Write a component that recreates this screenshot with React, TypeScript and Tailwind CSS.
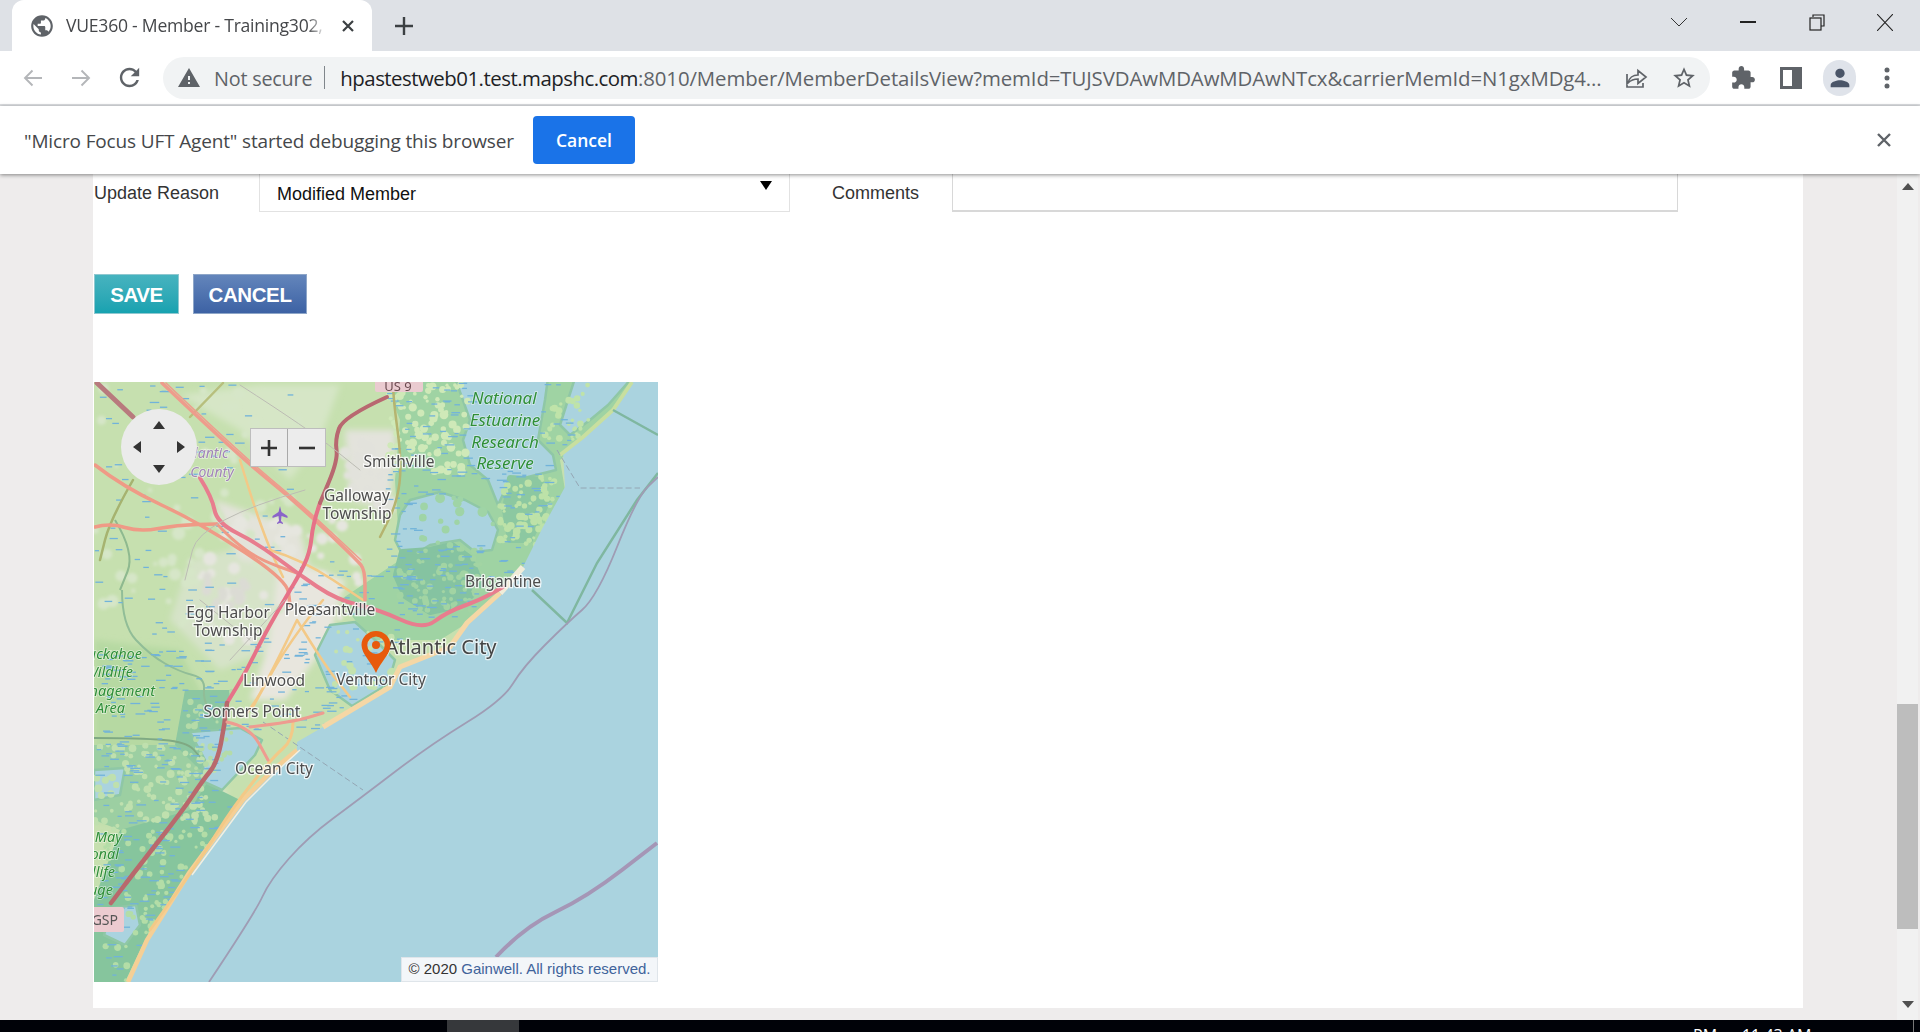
import React from "react";

const UI = "font-['Open_Sans',sans-serif]";

function I({ d, size = 24, cls = "", fill = "currentColor" }: { d: string; size?: number; cls?: string; fill?: string }) {
  return (
    <svg width={size} height={size} viewBox="0 0 24 24" className={cls} fill={fill}>
      <path d={d} />
    </svg>
  );
}

const GLOBE = "M12 2C6.48 2 2 6.48 2 12s4.48 10 10 10 10-4.48 10-10S17.52 2 12 2zm-1 17.93c-3.95-.49-7-3.85-7-7.93 0-.62.08-1.21.21-1.79L9 15v1c0 1.1.9 2 2 2v1.93zm6.9-2.54c-.26-.81-1-1.39-1.9-1.39h-1v-3c0-.55-.45-1-1-1H8v-2h2c.55 0 1-.45 1-1V7h2c1.1 0 2-.9 2-2v-.41c2.93 1.19 5 4.06 5 7.41 0 2.08-.8 3.97-2.1 5.39z";
const PUZZLE = "M20.5 11H19V7c0-1.1-.9-2-2-2h-4V3.5C13 2.12 11.88 1 10.5 1S8 2.12 8 3.5V5H4c-1.1 0-1.99.9-1.99 2v3.8H3.5c1.49 0 2.7 1.21 2.7 2.7s-1.21 2.7-2.7 2.7H2V20c0 1.1.9 2 2 2h3.8v-1.5c0-1.49 1.21-2.7 2.7-2.7 1.49 0 2.7 1.21 2.7 2.7V22H17c1.1 0 2-.9 2-2v-4h1.5c1.38 0 2.5-1.12 2.5-2.5S21.88 11 20.5 11z";
const WARN = "M1 21h22L12 2 1 21zm12-3h-2v-2h2v2zm0-4h-2v-4h2v4z";
const RELOAD = "M17.65 6.35C16.2 4.9 14.21 4 12 4c-4.42 0-7.99 3.58-7.99 8s3.57 8 7.99 8c3.73 0 6.84-2.55 7.73-6h-2.08c-.82 2.33-3.04 4-5.65 4-3.31 0-6-2.69-6-6s2.69-6 6-6c1.66 0 3.14.69 4.22 1.78L13 11h7V4l-2.35 2.35z";
const STAR = "M22 9.24l-7.19-.62L12 2 9.19 8.63 2 9.24l5.46 4.73L5.82 21 12 17.27 18.18 21l-1.63-7.03L22 9.24zM12 15.4l-3.76 2.27 1-4.28-3.32-2.88 4.38-.38L12 6.1l1.71 4.04 4.38.38-3.32 2.88 1 4.28L12 15.4z";
const PERSON = "M12 12c2.21 0 4-1.79 4-4s-1.79-4-4-4-4 1.79-4 4 1.79 4 4 4zm0 2c-2.67 0-8 1.34-8 4v2h16v-2c0-2.66-5.33-4-8-4z";

function TabStrip() {
  return (
    <div className="flex h-[51px] shrink-0 items-end bg-[#dee1e6]">
      <div className="ml-[12px] flex h-[51px] w-[360px] items-center rounded-t-[12px] bg-white pl-[17px] text-[#45474a]">
        <I d={GLOBE} size={26} cls="text-[#5f6368]" />
        <span className="ml-[11px] w-[260px] overflow-hidden whitespace-nowrap text-[17.6px] tracking-[-0.25px] [mask-image:linear-gradient(to_right,black_93%,transparent)]">VUE360 - Member - Training302,</span>
        <svg width="14" height="14" viewBox="0 0 14 14" className="ml-[15px]"><path d="M2 2l10 10M12 2L2 12" stroke="#3c4043" strokeWidth="2.2" /></svg>
      </div>
      <div className="flex h-[51px] w-[66px] items-center justify-center pr-[3px]">
        <svg width="20" height="20" viewBox="0 0 20 20"><path d="M10 1v18M1 10h18" stroke="#3c4043" strokeWidth="2.4" /></svg>
      </div>
      <div className="flex-1" />
      <div className="flex h-[51px] items-center pb-[7px]">
        <svg width="18" height="10" viewBox="0 0 18 10" className="mr-[52px]"><path d="M1 1l8 8 8-8" stroke="#333" strokeWidth="1" fill="none" /></svg>
        <div className="mr-[53px] h-[1.5px] w-[16px] bg-[#222]" />
        <svg width="16" height="17" viewBox="0 0 16 17" className="mr-[52px]" fill="none" stroke="#222" strokeWidth="1.2"><path d="M4 3V1h11v11h-3" /><rect x="1" y="4" width="11" height="12" /></svg>
        <svg width="16" height="17" viewBox="0 0 16 17" className="mr-[27px]"><path d="M0 0l16 17M16 0L0 17" stroke="#222" strokeWidth="1.1" /></svg>
      </div>
    </div>
  );
}

function Toolbar() {
  return (
    <div className="flex h-[55px] shrink-0 items-center border-b-2 border-[#dcdee1] bg-white">
      <div className="ml-[23px] flex w-[130px] items-center text-[#b4b6b9]">
        <svg width="20" height="20" viewBox="0 0 20 20" fill="none" stroke="currentColor" strokeWidth="1.9"><path d="M19 10H2M9.5 2.5L2 10l7.500 7.500" /></svg>
        <svg width="20" height="20" viewBox="0 0 20 20" className="ml-[28px]" fill="none" stroke="currentColor" strokeWidth="1.9"><path d="M1 10h17M10.500 2.500L18 10l-7.500 7.500" /></svg>
        <I d={RELOAD} size={29} cls="ml-[24px] text-[#5f6368]" />
      </div>
      <div className="ml-[10px] flex h-[42px] w-[1547px] items-center rounded-full bg-[#f1f3f4] pl-[14px]">
        <I d={WARN} size={24} cls="text-[#5f6368]" />
        <span className="ml-[13px] whitespace-nowrap pt-[2px] text-[19.8px] tracking-[-0.2px] text-[#5f6368]">Not secure</span>
        <div className="ml-[12px] h-[23px] w-px bg-[#80868b]" />
        <span className="ml-[15px] w-[1262px] whitespace-nowrap pt-[2px] text-[20.4px] tracking-[-0.1px] text-[#5f6368]">
          <span className="tracking-[-0.5px] text-[#202124]">hpastestweb01.test.mapshc.com</span>:8010/Member/MemberDetailsView?memId=TUJSVDAwMDAwMDAwNTcx&amp;carrierMemId=N1gxMDg4...
        </span>
        <svg width="24" height="24" viewBox="0 0 24 24" className="ml-[22px]" fill="none" stroke="#5f6368" strokeWidth="1.700"><path d="M3 8v13h16v-4M4 17c1-5 5-8 10-8V4.500L22 11l-8 6.500V13c-4 0-7 1-10 4z" /></svg>
        <I d={STAR} size={26} cls="ml-[23px] text-[#5f6368]" />
      </div>
      <div className="ml-[20px] flex items-center text-[#5f6368]">
        <I d={PUZZLE} size={26} />
        <svg width="22" height="22" viewBox="0 0 22 22" className="ml-[24px]"><path fillRule="evenodd" d="M0 0h22v22H0zM3 3v16h9V3z" fill="#5f6368" /></svg>
        <div className="ml-[21px] flex h-[36px] w-[33px] items-center justify-center rounded-full bg-[#dfe3ea]">
          <I d={PERSON} size={28} cls="text-[#4a5568]" />
        </div>
        <svg width="6" height="22" viewBox="0 0 6 22" className="ml-[28px]" fill="#5f6368"><circle cx="3" cy="3" r="2.500" /><circle cx="3" cy="11" r="2.500" /><circle cx="3" cy="19" r="2.500" /></svg>
      </div>
    </div>
  );
}

function InfoBar() {
  return (
    <div className="z-10 flex h-[68px] shrink-0 items-center bg-white pl-[24px] shadow-[0_1px_4px_rgba(0,0,0,0.45)]">
      <span className="w-[509px] whitespace-nowrap pt-[2px] text-[19px] tracking-[-0.15px] text-[#45474a]">"Micro Focus UFT Agent" started debugging this browser</span>
      <div className="flex h-[48px] w-[102px] items-center justify-center rounded-[4px] bg-[#1a73e8] text-[17.500px] font-semibold text-white">Cancel</div>
      <div className="flex-1" />
      <svg width="16" height="16" viewBox="0 0 16 16" className="mr-[28px]"><path d="M2 2l12 12M14 2L2 14" stroke="#5f6368" strokeWidth="2.400" /></svg>
    </div>
  );
}

/* ---------- map drawing ---------- */
function rng(seed: number) {
  let s = seed;
  return () => {
    s = (s * 16807) % 2147483647;
    return s / 2147483647;
  };
}
type Box = [number, number, number, number, number];
const dashBoxes: Box[] = [
  [94, 382, 300, 640, 85],
  [94, 650, 215, 800, 140],
  [290, 560, 400, 720, 70],
  [385, 382, 570, 620, 280],
  [96, 800, 240, 982, 150],
  [200, 640, 330, 740, 50],
];
const r = rng(7421);
const dashes = dashBoxes
  .flatMap(([x0, y0, x1, y1, n]) =>
    Array.from({ length: n }, () => {
      const x = x0 + r() * (x1 - x0);
      const y = y0 + r() * (y1 - y0);
      return { x, y, l: 4 + r() * 6 };
    })
  )
  .filter((p) => !(p.x > 468 && p.x < 540 && p.y < 468) && !(p.x > 415 && p.x < 495 && p.y > 495 && p.y < 545));

type Blob = [number, number, number, number, number, string, number, number];
const blobDefs: Blob[] = [
  [500, 476, 556, 545, 70, "#bde2a8", 1.5, 4],
  [398, 548, 482, 610, 80, "#a2d4a3", 1.5, 3.5],
  [388, 384, 468, 472, 100, "#cfe9b8", 1.5, 4.500],
  [545, 384, 590, 440, 30, "#bfe3a9", 1.5, 3.5],
  [330, 625, 392, 692, 34, "#c3e2ae", 1.5, 4],
  [94, 745, 215, 830, 120, "#bfe0ae", 1.5, 4],
  [105, 830, 240, 982, 180, "#b3dda7", 1.5, 3.5],
  [412, 492, 497, 548, 16, "#9fd4a6", 2, 5],
  [185, 690, 232, 770, 30, "#b4dba8", 1.5, 3.5],
];
const r2 = rng(9913);
const blobs = blobDefs.flatMap(([x0, y0, x1, y1, n, c, a, b]) =>
  Array.from({ length: n }, () => ({
    x: x0 + r2() * (x1 - x0),
    y: y0 + r2() * (y1 - y0),
    r: a + r2() * (b - a),
    c,
  }))
);
const paleDefs: Blob[] = [
  [94, 382, 300, 640, 60, "#d6e6c8", 2, 7],
  [200, 520, 360, 640, 50, "#e6e6df", 2, 7],
  [345, 440, 395, 510, 26, "#e2e2dc", 3, 7],
  [205, 570, 260, 610, 16, "#dbdbd4", 3, 6],
];
const pales = paleDefs.flatMap(([x0, y0, x1, y1, n, c, a, b]) =>
  Array.from({ length: n }, () => ({
    x: x0 + r2() * (x1 - x0),
    y: y0 + r2() * (y1 - y0),
    r: a + r2() * (b - a),
    c,
  }))
);

function smooth(d: string) {
  return d
    .split("M")
    .filter(Boolean)
    .map((seg) => {
      const pts = seg.split("L").map((p) => p.trim().split(/\s+/).map(Number));
      if (pts.length < 3) return "M" + seg;
      let out = `M${pts[0][0]} ${pts[0][1]}`;
      for (let i = 1; i < pts.length - 1; i++) {
        const mx = (pts[i][0] + pts[i + 1][0]) / 2;
        const my = (pts[i][1] + pts[i + 1][1]) / 2;
        out += `Q${pts[i][0]} ${pts[i][1]} ${mx} ${my}`;
      }
      const last = pts[pts.length - 1];
      return out + `L${last[0]} ${last[1]}`;
    })
    .join("");
}

const COAST = "M632 382 L613 410 L583 437 L563 452 L565 487 L543 527 L523 567 L500 593 L467 623 L450 647 L400 667 L390 687 L323 727 L297 742 L297 750 L273 770 L243 800 L189 873 L147 940 L128 982";
const OCEAN = COAST + " L658 982 L658 382 Z";

const roads: { d: string; c: string; w: number }[] = [
  { d: "M240 460 L253 503 L270 550 L283 577", c: "#f3c987", w: 2.5 },
  { d: "M270 550 L303 560 L363 600", c: "#f3c987", w: 2.5 },
  { d: "M297 620 L263 690 L247 713M297 620 L323 663 L350 697M323 600 L290 640 L253 707", c: "#f3c987", w: 2.5 },
  { d: "M293 722 L293 740 L273 757 L233 807 L200 860 L150 930", c: "#f3c987", w: 3 },
  { d: "M223 383 L190 417", c: "#b7bf7d", w: 2.5 },
  { d: "M133 480 L110 520 L100 560", c: "#a6b36f", w: 2.5 },
  { d: "M393 382 L393 397 L402 463 L397 503 L380 537", c: "#b5b46f", w: 2.5 },
  { d: "M97 383 L133 417", c: "#b87a7d", w: 5 },
  { d: "M162 383 L240 457 L297 503 L357 560 L365 570 L365 600", c: "#ee9c8c", w: 3.500 },
  { d: "M166 383 L244 457 L300 503 L361 560", c: "#ee9c8c", w: 1.500 },
  { d: "M95 465 L123 487 L200 523 L287 580 L290 605", c: "#ef9a86", w: 3.500 },
  { d: "M95 527 L110 523 L140 532 L177 525 L217 524", c: "#ef9a86", w: 3.500 },
  { d: "M217 524 L232 540 L260 560 L297 573", c: "#ef9a86", w: 3 },
  { d: "M200 478 L212 497 L217 523 L257 543 L297 573 L337 600 L380 610 L423 630 L447 612 L480 600 L503 587", c: "#e87d8e", w: 4 },
  { d: "M320 503 L313 523 L310 553 L298 577 L290 590 L263 637 L247 670 L227 703", c: "#e67288", w: 4 },
  { d: "M387 397 L343 417 L335 440 L338 460 L320 503", c: "#b8676f", w: 4 },
  { d: "M227 703 L225 723 L217 763 L203 780 L183 810 L136 870 L111 903", c: "#b8696c", w: 4.500 },
  { d: "M227 722 L250 727 L268 760M250 727 L293 722 L323 713", c: "#ee9c90", w: 3 },
  { d: "M240 385 L310 430 L360 470", c: "#bcbcb4", w: 1 },
  { d: "M305 490 L200 520 L185 580M200 600 L250 640M285 600 L230 660", c: "#bcbcb4", w: 1 },
];

const place = "fill-[#4d4d4d] stroke-[#ffffffcc] text-[15.500px] [paint-order:stroke] [stroke-width:2.500px]";
const green = "fill-[#2f8f38] stroke-[#ffffff88] italic [paint-order:stroke] [stroke-width:1.500px]";
const labels: [string, number, number][] = [
  ["Smithville", 399, 467],
  ["Galloway", 357, 501],
  ["Township", 357, 519],
  ["Brigantine", 503, 587],
  ["Egg Harbor", 228, 618],
  ["Township", 228, 636],
  ["Pleasantville", 330, 615],
  ["Ventnor City", 381, 685],
  ["Linwood", 274, 686],
  ["Somers Point", 252, 717],
  ["Ocean City", 274, 774],
];

function MapArt() {
  return (
    <svg viewBox="94 382 564 600" className="block h-[600px] w-[564px]" fontFamily="'Noto Sans',sans-serif">
      <defs>
        <filter id="soft" x="0" y="0" width="1" height="1">
          <feGaussianBlur stdDeviation="0.55" />
        </filter>
        <filter id="mid" x="0" y="0" width="1" height="1">
          <feGaussianBlur stdDeviation="1.6" />
        </filter>
        <filter id="wide" x="-0.1" y="-0.1" width="1.2" height="1.2">
          <feGaussianBlur stdDeviation="3" />
        </filter>
      </defs>
      <rect x="94" y="382" width="564" height="600" fill="#c6e0af" />
      <g filter="url(#wide)">
        <path d="M180 395L260 385L340 385L320 440L290 480L240 430Z" fill="#d6e6c6" />
        <path d="M190 560L270 540L300 570L270 650L220 670L170 620Z" fill="#d6e3c8" />
        <path d="M94 640L180 650L215 720L200 790L150 830L94 820Z" fill="#b6d9a2" />
        <path d="M345 430L395 430L390 510L350 500Z" fill="#e3e3dc" />
        <path d="M280 555L345 580L330 640L285 700L250 700L270 640Z" fill="#e8e6de" />
        <path d="M215 500L300 530L310 570L240 560Z" fill="#e3e3da" />
        <path d="M135 870L190 800L228 790L170 880L140 925Z" fill="#e9e7dd" />
      </g>
      <g filter="url(#mid)">
        {pales.map((p, i) => (
          <circle key={i} cx={p.x} cy={p.y} r={p.r} fill={p.c} />
        ))}
      </g>
      <g filter="url(#soft)">
        {/* marsh */}
        <path d="M385 382L640 382L560 460L565 490L520 590L440 640L370 640L340 600L400 560L395 480L400 420Z" fill="#9fd3a3" />
        <path d="M120 830L200 780L240 800L190 873L145 940L125 982L94 982L94 900Z" fill="#86c59d" />
        <path d="M94 745L200 745L215 770L190 810L120 830L94 820Z" fill="#9ccfa2" />
        <path d="M185 690L230 690L225 740L200 770L175 745Z" fill="#8cc7a1" />
        {/* inland waters */}
        <g fill="#aad3df" stroke="#8fc7a6" strokeWidth="2.500" strokeLinejoin="round">
          <path d="M455 378L548 378L545 400L538 440L553 455L556 470L528 477L505 490L498 505L488 480L470 465L463 440L470 420Z" />
          <path d="M410 500L440 492L465 500L488 512L498 530L492 550L475 552L460 540L430 545L405 560L395 540L400 515Z" />
          <path d="M575 378L632 378L608 405L590 420L570 435L560 425Z" />
          <path d="M330 625L355 622L375 640L395 660L388 684L352 706L330 690L315 655Z" />
          <path d="M190 732L240 728L262 740L255 755L222 790L200 780L205 760Z" />
          <path d="M112 908L136 905L140 925L125 945L104 935Z" />
          <path d="M94 770L125 768L120 795L94 800Z" />
        </g>
        <path d="M402 552L430 550L452 545L470 558L482 585L462 605L430 612L405 596L396 575Z" fill="#85c3a1" stroke="#85c3a1" strokeWidth="6" strokeLinejoin="round" />
        <path d="M510 478L540 480L548 500L530 540L510 540L505 510Z" fill="#8cc8a1" stroke="#8cc8a1" strokeWidth="6" strokeLinejoin="round" />
        {blobs.map((p, i) => (
          <circle key={i} cx={p.x} cy={p.y} r={p.r} fill={p.c} />
        ))}
        {/* wetland edges */}
        <path d={smooth("M122 590 L122 625 L150 655 L180 672 L205 678 L203 700 L215 720")} fill="none" stroke="#91bd97" strokeWidth="2" />
        <path d={smooth("M115 520 L135 553 L120 590")} fill="none" stroke="#8eb98f" strokeWidth="2" />
        <path d={smooth("M94 738 L140 738 L187 742 L200 757")} fill="none" stroke="#7fa983" strokeWidth="1.800" />
        {dashes.map((p, i) => (
          <line key={i} x1={p.x} y1={p.y} x2={p.x + p.l} y2={p.y} stroke="#71b3da" strokeWidth="1.300" />
        ))}
        {/* ocean */}
        <path d={OCEAN} fill="#aad3df" />
        <path d="M632 382L613 410L583 437L560 455" fill="none" stroke="#c8df9f" strokeWidth="4" />
        <path d="M523 567L500 593" fill="none" stroke="#f1ecd8" strokeWidth="6" />
        <path d="M500 593L467 623L450 647L400 667L390 687L323 727" fill="none" stroke="#f5d7a5" strokeWidth="5" />
        <path d="M297 750L273 770L243 800L189 873L147 940L128 982" fill="none" stroke="#f5cf95" strokeWidth="4.500" />
        <path d="M300 750L276 772L246 802L192 875" fill="none" stroke="#f3efe0" strokeWidth="1.500" />
        {/* boundaries, ferries */}
        <path d="M613 410L658 435M532 590L567 623L597 563L637 500L658 473" fill="none" stroke="#7fb7a0" strokeWidth="2.500" />
        <path d={smooth("M209 982 L255 913 L270 880 L308 837 L358 800 L430 745 L503 700 L523 667 L567 623 L597 597 L637 497 L658 477")} fill="none" stroke="#9f9cb4" strokeWidth="1.800" />
        <path d={smooth("M496 957 L524 927 L587 897 L657 843")} fill="none" stroke="#a596b6" strokeWidth="4" />
        <path d="M263 722L363 790M557 450L580 488L640 488" fill="none" stroke="#94a6b4" strokeWidth="1" strokeDasharray="6 3" />
        {/* roads */}
        {roads.map((rd, i) => (
          <path key={i} d={smooth(rd.d)} fill="none" stroke={rd.c} strokeWidth={rd.w} strokeLinejoin="round" strokeLinecap="round" />
        ))}
        {/* airport */}
        <path d="M280 506l1.500 6 6 4v2l-6-2-.5 5 2 2v1l-3-1-3 1v-1l2-2-.5-5-6 2v-2l6-4z" fill="#8a63c9" />
        {/* shields */}
        <rect x="375" y="376" width="48" height="16" rx="2" fill="#eacbd0" />
        <text x="398" y="391" textAnchor="middle" className="fill-[#6b4b50] text-[13px]">US 9</text>
        <rect x="90" y="907" width="34" height="25" rx="2" fill="#eccbd0" />
        <text x="118" y="925" textAnchor="end" className="fill-[#555] text-[14px]">GSP</text>
        {/* labels */}
        {labels.map(([t, x, y], i) => (
          <text key={i} x={x} y={y} textAnchor="middle" className={place}>{t}</text>
        ))}
        <text x="441" y="654" textAnchor="middle" className="fill-[#454545] stroke-[#ffffffaa] text-[20px] [paint-order:stroke] [stroke-width:2.500px]">Atlantic City</text>
        {[["National", 504, 404], ["Estuarine", 505, 426], ["Research", 505, 448], ["Reserve", 505, 469]].map(([t, x, y]) => (
          <text key={t as string} x={x as number} y={y as number} textAnchor="middle" className={green + " text-[17px]"}>{t}</text>
        ))}
        {[["Tuckahoe", 142, 659], ["Wildlife", 133, 677], ["Management", 155, 696], ["Area", 125, 713], ["May", 122, 842], ["National", 119, 859], ["Wildlife", 115, 877], ["Refuge", 113, 895]].map(([t, x, y], i) => (
          <text key={i} x={x as number} y={y as number} textAnchor="end" className={green + " text-[14.500px]"}>{t}</text>
        ))}
        <text x="205" y="458" textAnchor="middle" className="fill-[#a184b8] stroke-[#ffffff88] text-[14px] italic [paint-order:stroke] [stroke-width:1.500px]">Atlantic</text>
        <text x="212" y="477" textAnchor="middle" className="fill-[#a184b8] stroke-[#ffffff88] text-[14px] italic [paint-order:stroke] [stroke-width:1.500px]">County</text>
      </g>
      {/* pin */}
      <path fillRule="evenodd" d="M376 631c-8 0-14.500 6.300-14.500 14 0 9 10 17 14.500 28 4.500-11 14.500-19 14.500-28 0-7.700-6.500-14-14.500-14zm0 5.500a8.700 8.700 0 1 1 0 17.400 8.700 8.700 0 0 1 0-17.400z" fill="#e85a0c" />
      <circle cx="376" cy="645" r="4" fill="#e85a0c" />
    </svg>
  );
}

function MapControls() {
  return (
    <>
      <div className="absolute left-[27px] top-[27px] h-[76px] w-[76px] rounded-full bg-[#ebebeb]">
        <svg viewBox="0 0 76 76" className="h-[76px] w-[76px]" fill="#333">
          <path d="M38 12l6 8H32zM38 64l-6-8h12zM12 38l8-6v12zM64 38l-8 6V32z" />
        </svg>
      </div>
      <div className="absolute left-[156px] top-[46px] flex h-[39px] w-[76px] border border-[#bdbdbd] bg-[#ececec] text-[#333]">
        <div className="flex w-[37px] items-center justify-center border-r border-[#a9a9a9]">
          <svg width="16" height="16" viewBox="0 0 16 16"><path d="M8 0v16M0 8h16" stroke="#333" strokeWidth="2.600" /></svg>
        </div>
        <div className="flex flex-1 items-center justify-center">
          <svg width="16" height="4" viewBox="0 0 16 4"><path d="M0 2h16" stroke="#333" strokeWidth="2.600" /></svg>
        </div>
      </div>
      <div className="absolute bottom-0 right-0 flex h-[25px] w-[257px] items-center justify-center whitespace-nowrap border border-[#dfe5ea] bg-[#f3f6f9] text-[15px] text-[#333]">
        © 2020&nbsp;<span className="text-[#40639b]">Gainwell. All rights reserved.</span>
      </div>
    </>
  );
}

function Page() {
  return (
    <div className="relative flex min-h-0 flex-1 bg-[#eeecec] font-['Liberation_Sans',sans-serif]">
      <div className="ml-[93px] h-[834px] w-[1710px] overflow-hidden bg-white pl-[1px]">
        <div className="flex h-[38px] items-start">
          <div className="w-[165px] pt-[6px] text-[18px] text-[#333]">Update Reason</div>
          <div className="relative flex h-[38px] w-[531px] items-center border-x border-b border-[#e2e2e2] pl-[17px] pt-[3px] text-[18px] text-[#111]">
            Modified Member
            <div className="absolute right-[17px] top-[7px] h-0 w-0 border-x-[6px] border-t-[9px] border-x-transparent border-t-black" />
          </div>
          <div className="ml-[42px] w-[120px] pt-[6px] text-[18px] text-[#333]">Comments</div>
          <div className="h-[38px] w-[726px] border-x border-b-2 border-[#d8d8d8]" />
        </div>
        <div className="mt-[62px] flex gap-[14px]">
          <div className="flex h-[40px] w-[85px] items-center justify-center border border-[#8fc8d0] bg-gradient-to-b from-[#46b3bf] to-[#16a2b0] pt-[2px] text-[20.500px] font-bold tracking-[-0.4px] text-white">SAVE</div>
          <div className="flex h-[40px] w-[114px] items-center justify-center border border-[#8ea6c8] bg-gradient-to-b from-[#6385bb] to-[#3d62a4] pt-[2px] text-[20.500px] font-bold tracking-[-0.4px] text-white">CANCEL</div>
        </div>
        <div className="relative mt-[68px] h-[600px] w-[564px] overflow-hidden">
          <MapArt />
          <MapControls />
        </div>
      </div>
      {/* scrollbar */}
      <div className="absolute right-[2px] top-0 flex h-full w-[21px] flex-col items-center bg-[#f1f1f1]">
        <div className="mt-[9px] h-0 w-0 border-x-[6px] border-b-[7px] border-x-transparent border-b-[#505050]" />
        <div className="mt-[514px] h-[225px] w-full bg-[#bdbdbd]" />
        <div className="mt-[72px] h-0 w-0 border-x-[6px] border-t-[7px] border-x-transparent border-t-[#505050]" />
      </div>
    </div>
  );
}

function Taskbar() {
  return (
    <div className="relative flex h-[12px] shrink-0 overflow-hidden bg-[#000208] font-['Open_Sans',sans-serif] text-white">
      <div className="ml-[447px] h-full w-[72px] bg-[#36383b]" />
      <div className="absolute right-[6px] top-0 h-full w-px bg-[#777]" />
      <div className="absolute left-[1693px] top-[7px] whitespace-nowrap text-[16px] leading-[16px]">PM&nbsp;&nbsp;&nbsp;&nbsp;&nbsp;&nbsp;11:43 AM</div>
    </div>
  );
}

export default function App() {
  return (
    <div className={"flex h-[1032px] w-[1920px] flex-col overflow-hidden bg-white " + UI}>
      <TabStrip />
      <Toolbar />
      <InfoBar />
      <Page />
      <Taskbar />
    </div>
  );
}
